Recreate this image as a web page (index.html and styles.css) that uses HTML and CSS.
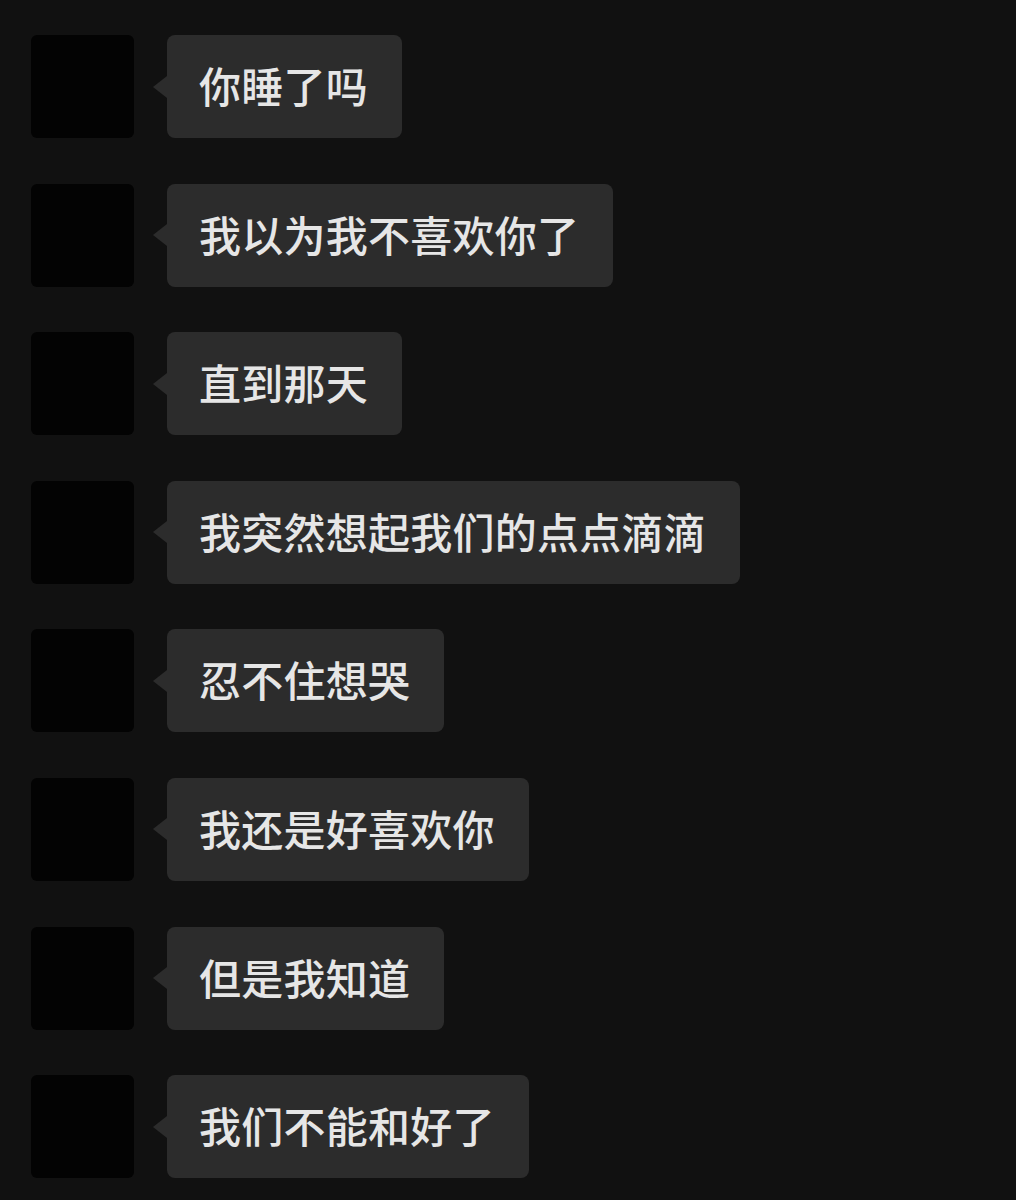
FILE: index.html
```html
<!DOCTYPE html>
<html lang="zh-CN">
<head>
    <meta charset="UTF-8">
    <meta name="viewport" content="width=device-width, initial-scale=1.0">
    <title>聊天</title>
    <link rel="stylesheet" href="styles.css">
</head>
<body>
    <div class="chat">
        <div class="message">
            <div class="avatar"></div>
            <div class="bubble">你睡了吗</div>
        </div>
        <div class="message">
            <div class="avatar"></div>
            <div class="bubble">我以为我不喜欢你了</div>
        </div>
        <div class="message">
            <div class="avatar"></div>
            <div class="bubble">直到那天</div>
        </div>
        <div class="message">
            <div class="avatar"></div>
            <div class="bubble">我突然想起我们的点点滴滴</div>
        </div>
        <div class="message">
            <div class="avatar"></div>
            <div class="bubble">忍不住想哭</div>
        </div>
        <div class="message">
            <div class="avatar"></div>
            <div class="bubble">我还是好喜欢你</div>
        </div>
        <div class="message">
            <div class="avatar"></div>
            <div class="bubble">但是我知道</div>
        </div>
        <div class="message">
            <div class="avatar"></div>
            <div class="bubble">我们不能和好了</div>
        </div>
    </div>
</body>
</html>
```

FILE: styles.css
```css
body {
    margin: 0;
    background: #111111;
    font-family: "Noto Sans CJK SC", "Noto Sans", sans-serif;
    min-height: 100vh;
}
.chat {
    display: flex;
    flex-direction: column;
    gap: 45.6px;
    padding: 35px 0 0 31px;
}
.message {
    display: flex;
    align-items: stretch;
    gap: 33px;
    height: 103px;
}
.avatar {
    width: 103px;
    flex-shrink: 0;
    background: #030303;
    border-radius: 6px;
}
.bubble {
    position: relative;
    display: flex;
    align-items: center;
    padding: 0 34px 4px 32px;
    background: #2c2c2c;
    border-radius: 8px;
    color: #e6e6e6;
    font-size: 42px;
    font-weight: 500;
    letter-spacing: 0.25px;
    white-space: nowrap;
}
/* little tail pointing at the avatar */
.bubble::before {
    content: "";
    position: absolute;
    left: -14px;
    top: 50%;
    margin-top: -11px;
    border-top: 11px solid transparent;
    border-bottom: 11px solid transparent;
    border-right: 14px solid #2c2c2c;
}
```
